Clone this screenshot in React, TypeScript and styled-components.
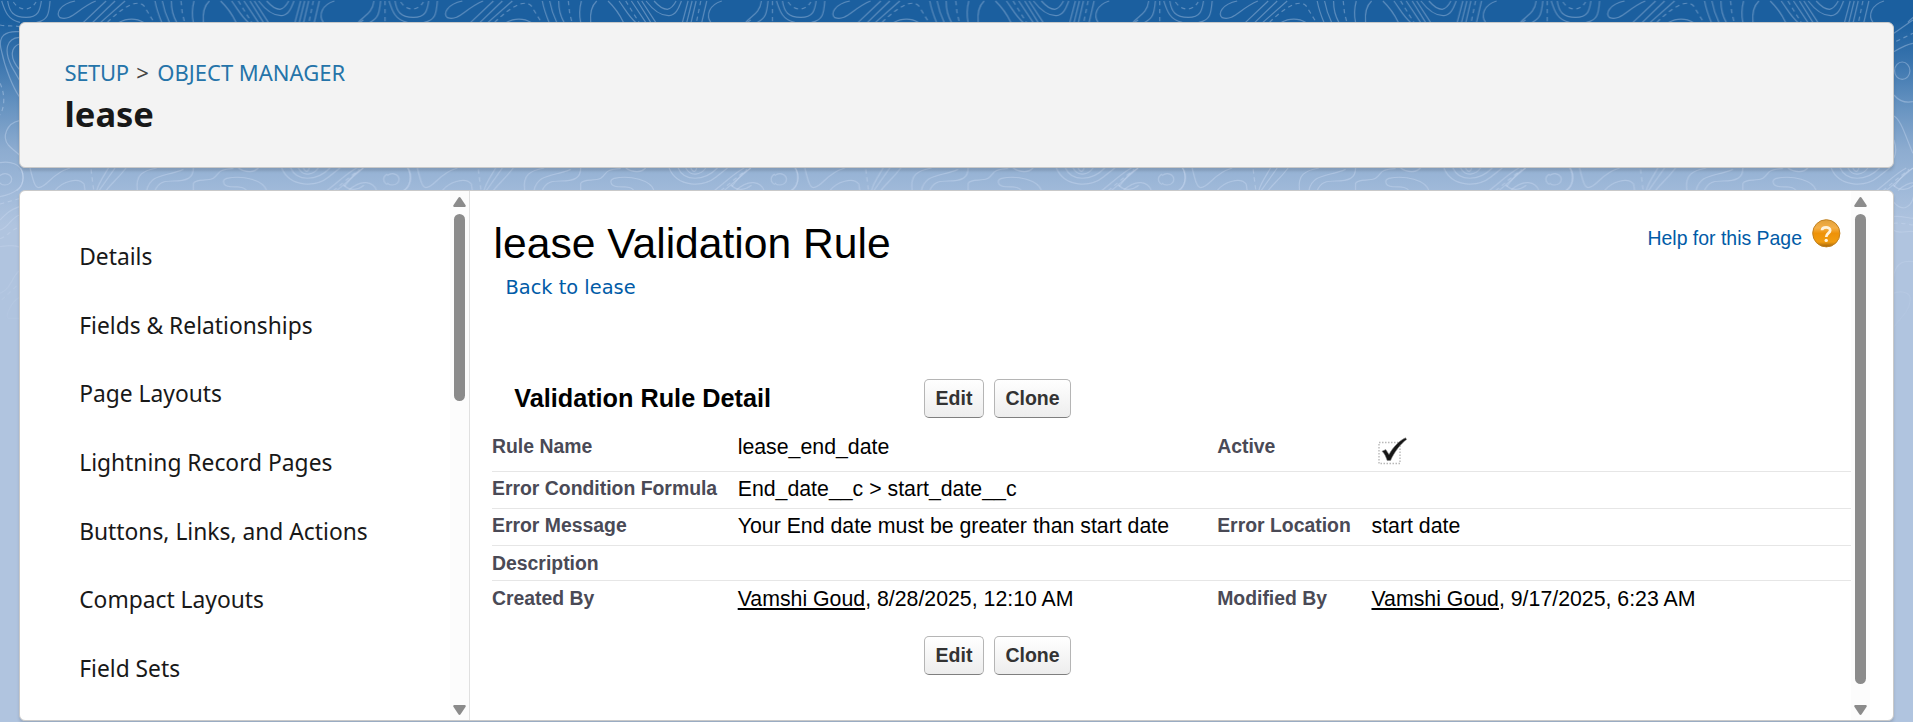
import React from "react";
import styled, { createGlobalStyle } from "styled-components";

const GlobalStyle = createGlobalStyle`
  *, *::before, *::after { box-sizing: border-box; }
  html, body { margin: 0; padding: 0; height: 100%; overflow: hidden; }
  h1, h2, p, ul { margin: 0; padding: 0; }
  a { color: inherit; text-decoration: none; }
`;

const uiFont = `"Segoe UI", "Noto Sans", "Open Sans", sans-serif`;
const classicFont = `Arial, "Liberation Sans", sans-serif`;

const Page = styled.div`
  position: relative;
  display: flex;
  flex-direction: column;
  gap: 22px;
  height: 722px;
  padding: 22px 19px 0 19px;
  background: linear-gradient(
    to bottom,
    #1b5f9f 0,
    #1b5f9f 20px,
    #3873ad 60px,
    #6592c0 105px,
    #8dacd0 150px,
    #9fb9d9 190px,
    #b0c4df 225px
  );
  font-family: ${uiFont};
`;

const Backdrop = styled.svg`
  position: absolute;
  inset: 0;
  width: 1913px;
  height: 360px;
`;

const Card = styled.section<{ $tone: string }>`
  position: relative;
  background: ${(p) => p.$tone};
  border: 1px solid #c9c9c9;
  border-radius: 6px;
  box-shadow: 0 3px 3px rgba(0, 0, 0, 0.13);
  width: 1875px;
  overflow: hidden;
`;

const HeaderCard = styled(Card)`
  flex: none;
  height: 146px;
  padding: 34px 44.5px 0;
  overflow: visible;
`;

const Breadcrumbs = styled.nav`
  display: flex;
  align-items: baseline;
  font-size: 22px;
  line-height: 30px;
  color: #2574a9;
`;

const CrumbLink = styled.a<{ $tracking?: number }>`
  letter-spacing: ${(p) => p.$tracking ?? 0}px;
`;

const Separator = styled.span`
  margin: 0 8.5px 0 7.5px;
  color: #444;
`;

const ObjectName = styled.h1`
  margin-top: 5px;
  font-size: 34.5px;
  line-height: 44px;
  font-weight: 700;
  color: #181818;
`;

const BodyCard = styled(Card)`
  flex: none;
  display: flex;
  height: 531px;
`;

const Sidebar = styled.aside`
  display: flex;
  width: 450px;
  border-right: 1px solid #e0e0e0;
`;

const NavList = styled.ul`
  flex: 1;
  list-style: none;
  padding: 32px 0 0 59.2px;
`;

const NavItem = styled.li`
  height: 68.67px;
  line-height: 68.67px;
  font-size: 22.8px;
  color: #181818;
  white-space: nowrap;
`;

const Track = styled.div`
  flex: none;
  display: flex;
  flex-direction: column;
  align-items: center;
  width: 19px;
  padding: 6px 0 5px;
  background: #fcfcfc;
`;

const Thumb = styled.div<{ $length: number }>`
  width: 11px;
  height: ${(p) => p.$length}px;
  margin-top: 7px;
  border-radius: 6px;
  background: #8b8b8b;
`;

const ArrowIcon = styled.svg<{ $down?: boolean }>`
  flex: none;
  width: 13px;
  height: 10px;
  fill: #8b8b8b;
  ${(p) => (p.$down ? "margin-top: auto; transform: rotate(180deg);" : "")}
`;

const Main = styled.main`
  display: flex;
  flex-direction: column;
  width: 1381px;
  padding: 28px 0 0 22px;
  background: #fff;
  font-family: ${classicFont};
`;

const PageHeader = styled.header`
  display: flex;
  justify-content: space-between;
  align-items: flex-start;
  height: 160px;
  padding-right: 10px;
`;

const PageTitle = styled.h1`
  padding-left: 1.6px;
  font-size: 42.6px;
  line-height: 48px;
  font-weight: 400;
  color: #000;
`;

const BackLink = styled.a`
  display: block;
  margin: 9px 0 0 13.5px;
  font-family: "DejaVu Sans", Verdana, sans-serif;
  font-size: 19.4px;
  line-height: 24px;
  color: #015ba7;
`;

const HelpLink = styled.a`
  display: flex;
  gap: 10px;
  font-size: 19.45px;
  line-height: 24px;
  color: #015ba7;
`;

const HelpText = styled.span`
  margin-top: 7px;
`;

const HelpIcon = styled.svg`
  width: 29px;
  height: 29px;
`;

const Toolbar = styled.div`
  display: flex;
  align-items: center;
  height: 39px;
`;

const SectionTitle = styled.h2`
  width: 432px;
  padding: 0 0 2px 22.2px;
  font-size: 25.25px;
  line-height: 30px;
  font-weight: 700;
  color: #000;
`;

const ButtonGroup = styled.div`
  display: flex;
  gap: 10px;
`;

const ActionButton = styled.button<{ $width: number }>`
  width: ${(p) => p.$width}px;
  height: 39px;
  padding: 0 0 1px;
  border: 1px solid #b5b5b5;
  border-bottom-color: #7f7f7f;
  border-radius: 5px;
  background: linear-gradient(#ffffff, #ededed);
  font: 700 19.5px ${classicFont};
  color: #333;
`;

const DetailTable = styled.div`
  margin-top: 12px;
`;

const DetailRow = styled.div<{ $height: number; $top: number; $last?: boolean }>`
  display: grid;
  grid-template-columns: 245.7px 479.5px 154.3px 1fr;
  height: ${(p) => p.$height}px;
  padding-top: ${(p) => p.$top}px;
  border-bottom: ${(p) => (p.$last ? "none" : "1px solid #e6e6e6")};
  line-height: 24px;
  white-space: nowrap;
`;

const Label = styled.span`
  font-size: 19.4px;
  font-weight: 700;
  color: #4a4a56;
`;

const Value = styled.span`
  padding-top: 1px;
  font-size: 21.3px;
  color: #000;
`;

const UserLink = styled.a`
  text-decoration: underline;
  text-decoration-thickness: 2px;
  text-underline-offset: 2px;
`;

const CheckIcon = styled.svg`
  display: block;
  width: 32px;
  height: 30px;
  margin: 1px 0 0 5px;
`;

const contourLines = [
  "M5 3C14 30 22 60 60 67",
  "M23 3C28 36 40 52 78 52C116 52 120 30 124 3",
  "M150 3C147 40 145 60 110 67",
  "M225 3C180 12 165 42 180 53C215 64 232 26 287 3",
  "M250 67L318 3M278 67L345 3M302 67L375 3",
  "M358 67C380 54 410 54 430 67",
  "M465 3C470 30 478 50 485 67M487 3C492 30 500 50 508 67M514 3C514 30 520 50 530 67",
  "M582 3C575 30 576 50 580 67M628 3C610 20 608 45 610 67",
  "M662 3C690 30 700 50 708 67M695 3C715 30 725 50 745 67M732 3L775 67M750 3L790 67M763 3L805 67",
  "M776 3C800 34 820 48 845 47C868 45 875 20 882 3M800 3C815 20 830 28 840 28C855 25 862 10 866 3",
  "M902 3L885 67M914 3L898 67M926 3L911 67M958 3L943 67",
  "M1003 3C965 15 955 45 970 67",
  "M1075 67C1090 48 1117 42 1122 3M1110 67C1135 55 1138 40 1142 3",
  "M62 504C75 530 70 560 50 572",
  "M90 504C100 545 105 562 115 563C145 560 150 522 210 504",
  "M165 572C185 545 235 530 252 552L255 572",
  "M325 504C310 530 295 550 290 572M345 504L297 572M378 504C350 540 330 555 318 572",
  "M412 572C405 522 430 512 470 504M440 572C450 520 500 530 550 508",
  "M465 572C475 545 495 543 520 543C560 543 580 535 580 504",
  "M580 572V550C590 535 620 545 640 535C660 520 650 508 700 506",
  "M740 572C735 565 730 560 690 560C668 558 665 540 680 535C730 525 790 540 800 572",
  "M715 504C740 522 765 515 775 504",
  "M845 504C870 565 950 560 985 532L1020 504M872 504C890 545 950 545 990 504M895 504C910 532 940 525 955 504M910 504C918 520 925 515 928 504",
  "M980 572C1010 550 1040 520 1070 504M1010 572L1090 504M1045 572C1085 535 1120 545 1130 572",
  "M1033 100L1090 60M1033 155C1055 142 1070 133 1090 130",
  "M1033 285C1050 305 1070 309 1090 305M1033 348C1055 360 1068 410 1090 460",
  "M1033 475C1040 460 1040 440 1033 420M1033 560C1060 525 1070 515 1090 505",
  "M1031 605C1060 640 1085 620 1092 590M1031 555C1050 575 1075 570 1092 556",
  "M1031 650C1055 645 1070 655 1092 655M1031 690C1050 705 1075 690 1092 695",
  "M1031 835C1038 780 1070 782 1092 785",
  "M1031 880C1060 870 1085 880 1082 900C1078 940 1050 952 1031 985",
  "M58 95C20 92-10 105 5 155C15 205 40 265 58 290M58 112C20 115 10 150 35 200L58 240M58 132C35 140 25 170 58 208",
  "M58 362C20 370 5 410 25 435C38 450 45 452 58 465",
  "M0 488C30 482 62 492 68 520C75 560 50 580 0 590",
  "M0 660C20 640 30 630 58 620M0 690C25 685 30 655 58 645M0 740C30 735 50 736 58 742",
  "M0 880C35 865 35 830 58 812M58 892C30 910 15 950 25 955L58 955",
];

const dashedContours = [
  "M40 6C58 34 92 34 108 6",
  "M322 67C370 20 412-4 432 18L462 67",
  "M543 3L547 40L554 67",
  "M715 3L755 67",
  "M940 3L927 67",
  "M1155 3V67",
  "M273 508L281 572",
  "M1000 572L1078 508",
  "M1040 124L1090 100",
  "M1031 670C1055 668 1070 672 1092 675",
  "M0 75C20 80 40 76 58 80",
  "M0 250C15 280 15 320 0 345",
  "M0 612L58 596M0 716C25 708 30 690 58 682M5 900L58 850",
];

function TopographicBackdrop() {
  return (
    <Backdrop viewBox="0 0 1913 360" aria-hidden="true">
      <defs>
        <pattern id="contours" width="387.4" height="360" patternUnits="userSpaceOnUse">
          <g
            transform="scale(0.33333)"
            fill="none"
            stroke="#dbe6fb"
            strokeOpacity="0.34"
            strokeWidth="3.6"
          >
            {contourLines.map((d) => (
              <path key={d} d={d} />
            ))}
            <path d={dashedContours.join("")} strokeDasharray="13 11" />
            <ellipse cx="15" cy="538" rx="20" ry="17" />
            <ellipse cx="1171" cy="538" rx="20" ry="17" />
            <ellipse cx="1058" cy="212" rx="23" ry="26" />
          </g>
        </pattern>
        <linearGradient id="fade" x1="0" y1="0" x2="0" y2="1">
          <stop offset="0" stopColor="#fff" />
          <stop offset="0.5" stopColor="#fff" />
          <stop offset="1" stopColor="#000" />
        </linearGradient>
        <mask id="fadeMask">
          <rect width="1913" height="360" fill="url(#fade)" />
        </mask>
      </defs>
      <rect width="1913" height="360" fill="url(#contours)" mask="url(#fadeMask)" />
    </Backdrop>
  );
}

function ScrollTrack({ length }: { length: number }) {
  const triangle = "M5.4 .8Q6.5 -.6 7.6 .8L12.6 8.3Q13.2 10 11.6 10H1.4Q-.2 10 .4 8.3Z";
  return (
    <Track>
      <ArrowIcon viewBox="0 0 13 10">
        <path d={triangle} />
      </ArrowIcon>
      <Thumb $length={length} />
      <ArrowIcon viewBox="0 0 13 10" $down>
        <path d={triangle} />
      </ArrowIcon>
    </Track>
  );
}

function Actions() {
  return (
    <ButtonGroup>
      <ActionButton $width={60}>Edit</ActionButton>
      <ActionButton $width={77}>Clone</ActionButton>
    </ButtonGroup>
  );
}

const sections = [
  "Details",
  "Fields & Relationships",
  "Page Layouts",
  "Lightning Record Pages",
  "Buttons, Links, and Actions",
  "Compact Layouts",
  "Field Sets",
];

export default function App() {
  return (
    <>
      <GlobalStyle />
      <Page>
        <TopographicBackdrop />
        <HeaderCard $tone="#f3f3f3">
          <Breadcrumbs>
            <CrumbLink $tracking={-0.35}>SETUP</CrumbLink>
            <Separator>&gt;</Separator>
            <CrumbLink>OBJECT MANAGER</CrumbLink>
          </Breadcrumbs>
          <ObjectName>lease</ObjectName>
        </HeaderCard>

        <BodyCard $tone="#fff">
          <Sidebar>
            <NavList>
              {sections.map((name) => (
                <NavItem key={name}>{name}</NavItem>
              ))}
            </NavList>
            <ScrollTrack length={187} />
          </Sidebar>

          <Main>
            <PageHeader>
              <div>
                <PageTitle>lease Validation Rule</PageTitle>
                <BackLink>Back to lease</BackLink>
              </div>
              <HelpLink>
                <HelpText>Help for this Page</HelpText>
                <HelpIcon viewBox="0 0 29 29">
                  <defs>
                    <linearGradient id="orb" x1="0" y1="0" x2="0" y2="1">
                      <stop offset="0" stopColor="#e0a03a" />
                      <stop offset="0.3" stopColor="#f5b048" />
                      <stop offset="0.5" stopColor="#ee9208" />
                      <stop offset="0.82" stopColor="#f19c10" />
                      <stop offset="1" stopColor="#a0630c" />
                    </linearGradient>
                  </defs>
                  <circle cx="14.3" cy="14.3" r="13.6" fill="url(#orb)" stroke="#c08020" strokeWidth="1" />
                  <path
                    d="M10 11.2C10 7.4 18.3 7.2 18.2 11.4C18.1 14.2 14.2 14.2 14.2 18"
                    fill="none"
                    stroke="#fff3dc"
                    strokeWidth="2.7"
                  />
                  <circle cx="14.2" cy="21.4" r="1.7" fill="#fff3dc" />
                </HelpIcon>
              </HelpLink>
            </PageHeader>

            <Toolbar>
              <SectionTitle>Validation Rule Detail</SectionTitle>
              <Actions />
            </Toolbar>

            <DetailTable>
              <DetailRow $height={42} $top={4}>
                <Label>Rule Name</Label>
                <Value>lease_end_date</Value>
                <Label>Active</Label>
                <Value>
                  <CheckIcon viewBox="0 0 32 30">
                    <rect
                      x="3"
                      y="6.5"
                      width="21"
                      height="21"
                      fill="none"
                      stroke="#b8b8b8"
                      strokeWidth="1.4"
                      strokeDasharray="1.5 1.5"
                    />
                    <path
                      d="M6 15.2L9.8 13.6L13 18.4C17 11.5 22.5 5 29.6 1.8L30.6 3.6C24.5 8 18.4 16 14.6 24.4L11.2 24.6C10 20.8 8.4 17.4 6 15.2Z"
                      fill="#161616"
                      stroke="#8a8a8a"
                      strokeWidth="0.6"
                      strokeLinejoin="round"
                    />
                  </CheckIcon>
                </Value>
              </DetailRow>
              <DetailRow $height={37} $top={4}>
                <Label>Error Condition Formula</Label>
                <Value>End_date__c &gt; start_date__c</Value>
              </DetailRow>
              <DetailRow $height={37} $top={4}>
                <Label>Error Message</Label>
                <Value>Your End date must be greater than start date</Value>
                <Label>Error Location</Label>
                <Value>start date</Value>
              </DetailRow>
              <DetailRow $height={35} $top={5}>
                <Label>Description</Label>
              </DetailRow>
              <DetailRow $height={55} $top={5} $last>
                <Label>Created By</Label>
                <Value>
                  <UserLink>Vamshi Goud</UserLink>, 8/28/2025, 12:10 AM
                </Value>
                <Label>Modified By</Label>
                <Value>
                  <UserLink>Vamshi Goud</UserLink>, 9/17/2025, 6:23 AM
                </Value>
              </DetailRow>
            </DetailTable>

            <Toolbar>
              <SectionTitle as="div" />
              <Actions />
            </Toolbar>
          </Main>
          <ScrollTrack length={470} />
        </BodyCard>
      </Page>
    </>
  );
}
